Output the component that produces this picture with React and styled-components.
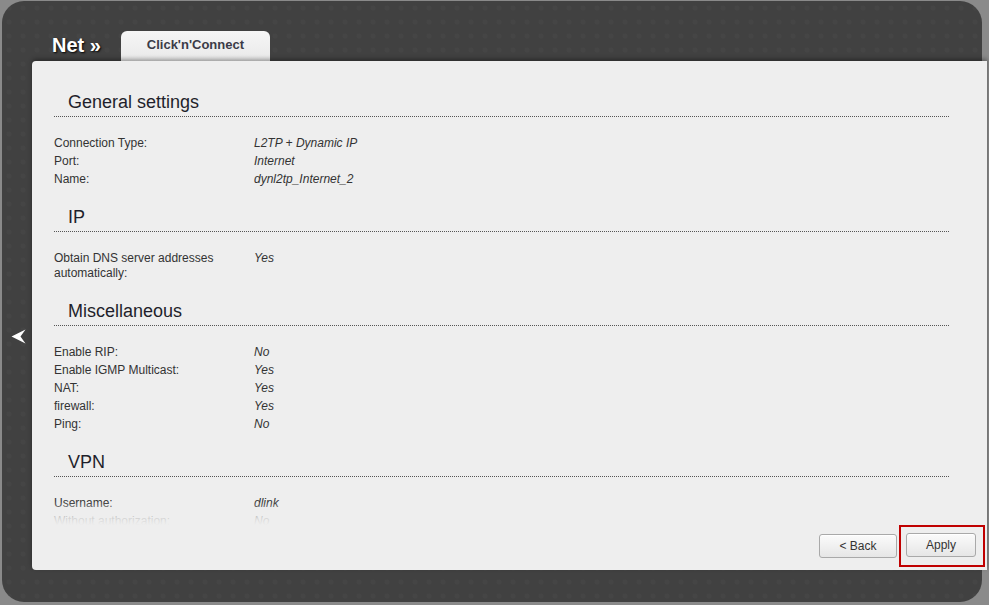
import React from 'react';
import styled, { createGlobalStyle } from 'styled-components';

const GlobalStyle = createGlobalStyle`
  html, body {
    margin: 0;
    padding: 0;
    background: #8a8a8a;
    font-family: 'Liberation Sans', Arial, sans-serif;
  }
`;

const sections = [
  {
    title: 'General settings',
    rows: [
      ['Connection Type:', 'L2TP + Dynamic IP'],
      ['Port:', 'Internet'],
      ['Name:', 'dynl2tp_Internet_2'],
    ],
  },
  {
    title: 'IP',
    rows: [['Obtain DNS server addresses automatically:', 'Yes']],
  },
  {
    title: 'Miscellaneous',
    rows: [
      ['Enable RIP:', 'No'],
      ['Enable IGMP Multicast:', 'Yes'],
      ['NAT:', 'Yes'],
      ['firewall:', 'Yes'],
      ['Ping:', 'No'],
    ],
  },
  {
    title: 'VPN',
    rows: [
      ['Username:', 'dlink'],
      ['Without authorization:', 'No'],
    ],
  },
];

const BackArrow = () => (
  <svg width="15" height="15" viewBox="0 0 15 15">
    <polygon points="0.5,7.5 14.5,0.5 9.5,7.5 14.5,14.5" fill="#ffffff" />
  </svg>
);

const App = () => {
  return (
    <>
      <GlobalStyle />
      <St.Frame>
        <St.Gutter>
          <BackArrow />
        </St.Gutter>

        <St.Main>
          <St.Header>
            <St.Crumb>Net »</St.Crumb>
            <St.Tab>Click'n'Connect</St.Tab>
          </St.Header>

          <St.Panel>
            <St.Scroll>
              {sections.map((s) => (
                <St.Section key={s.title}>
                  <St.SectionTitle>{s.title}</St.SectionTitle>
                  <St.Rows>
                    {s.rows.map(([label, value]) => (
                      <St.Row key={label}>
                        <St.Label>{label}</St.Label>
                        <St.Value>{value}</St.Value>
                      </St.Row>
                    ))}
                  </St.Rows>
                </St.Section>
              ))}
              <St.Fade />
            </St.Scroll>

            <St.Footer>
              <St.Button type="button" $width={78}>
                &lt; Back
              </St.Button>
              <St.Highlight>
                <St.Button type="button" $width={70}>
                  Apply
                </St.Button>
              </St.Highlight>
            </St.Footer>
          </St.Panel>
        </St.Main>
      </St.Frame>
    </>
  );
};

export default App;

const St = {
  Frame: styled.div`
    display: flex;
    width: 980px;
    height: 601px;
    margin: 1px 0 0 2px;
    border-radius: 22px;
    background-color: #414141;
    background-image: radial-gradient(rgba(255, 255, 255, 0.025) 2px, transparent 3px);
    background-size: 14px 14px;
    box-sizing: border-box;
    padding-bottom: 32px;
  `,

  Gutter: styled.div`
    display: flex;
    align-items: center;
    justify-content: center;
    width: 30px;
    flex-shrink: 0;
    padding-top: 101px;
    box-sizing: border-box;
    padding-left: 2px;
  `,

  Main: styled.div`
    display: flex;
    flex-direction: column;
    flex: 1;
    min-height: 0;
    margin-right: -5px;
  `,

  Header: styled.div`
    display: flex;
    align-items: flex-end;
    flex-shrink: 0;
    gap: 20px;
    height: 60px;
    padding-left: 20px;
  `,

  Crumb: styled.div`
    font-family: 'Liberation Sans', Arial, sans-serif;
    font-weight: 700;
    font-size: 20px;
    line-height: 24px;
    color: #ffffff;
    text-shadow: 1px 1px 2px #000;
    margin-bottom: 4px;
  `,

  Tab: styled.div`
    width: 149px;
    height: 30px;
    box-sizing: border-box;
    padding-top: 6px;
    border-radius: 6px 6px 0 0;
    background: linear-gradient(#f6f6f6, #e9e9e9);
    text-align: center;
    font-family: 'Liberation Sans', Arial, sans-serif;
    font-weight: 700;
    font-size: 13px;
    line-height: 16px;
    color: #3b3b47;
  `,

  Panel: styled.div`
    display: flex;
    flex-direction: column;
    flex: 1;
    min-height: 0;
    background-color: #eeeeee;
    border-radius: 4px 0 0 4px;
    box-shadow: 0 -2px 4px rgba(0, 0, 0, 0.35);
  `,

  Scroll: styled.div`
    position: relative;
    flex: 1;
    min-height: 0;
    overflow: hidden;
    padding: 30px 38px 0 22px;
  `,

  Fade: styled.div`
    position: absolute;
    left: 0;
    right: 0;
    bottom: 0;
    height: 24px;
    background: linear-gradient(rgba(238, 238, 238, 0), rgba(238, 238, 238, 0.85) 70%, #eeeeee);
  `,

  Section: styled.section`
    margin-bottom: 18px;
  `,

  SectionTitle: styled.h2`
    margin: 0;
    padding: 0 0 3px 14px;
    font-family: 'Liberation Sans', Arial, sans-serif;
    font-weight: 400;
    font-size: 18px;
    line-height: 22px;
    color: #1f1f2b;
    border-bottom: 1px dotted #555555;
  `,

  Rows: styled.div`
    display: flex;
    flex-direction: column;
    margin-top: 17px;
  `,

  Row: styled.div`
    display: grid;
    grid-template-columns: 200px 1fr;
    padding: 1.5px 0;
    font-family: 'Liberation Sans', Arial, sans-serif;
    font-size: 12px;
    line-height: 15px;
    color: #333333;
  `,

  Label: styled.div`
    padding-right: 30px;
  `,

  Value: styled.div`
    font-style: italic;
  `,

  Footer: styled.div`
    display: flex;
    align-items: center;
    justify-content: flex-end;
    flex-shrink: 0;
    gap: 2px;
    height: 42px;
    padding: 0 2px 3px 0;
  `,

  Button: styled.button`
    width: ${(p) => p.$width}px;
    height: 24px;
    padding: 0;
    border: 1px solid #a9a9a9;
    border-radius: 3px;
    background: linear-gradient(#fbfbfb, #e6e6e6);
    font-family: 'Liberation Sans', Arial, sans-serif;
    font-size: 12px;
    color: #333333;
    box-shadow: inset 0 1px 0 #ffffff;
  `,

  Highlight: styled.div`
    display: flex;
    padding: 6px 7px 8px 5px;
    border: 2px solid #c00000;
  `,
};
